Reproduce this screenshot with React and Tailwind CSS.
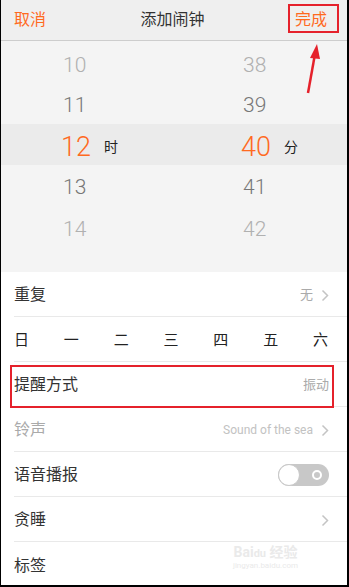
import React from 'react';

const ORANGE = 'text-[#ff6a1f]';

const Chevron = ({ className = '' }) => (
  <svg width="8" height="13" viewBox="0 0 8 13" className={className}>
    <path d="M1.5 1.5 L6.5 6.5 L1.5 11.5" fill="none" stroke="#c4c4c4" strokeWidth="1.5" />
  </svg>
);

const PickerRow = ({ hour, minute, tone, h }) => (
  <div className={`grid grid-cols-[180px_1fr] items-center ${h} pt-[3px] text-[21px] font-light ${tone}`}>
    <div className="pl-[62px]">{hour}</div>
    <div className="pl-[62px]">{minute}</div>
  </div>
);

const Row = ({ children, last = false }) => (
  <div className={`h-[45px] flex items-center pt-[2px] pr-[18px] ${last ? '' : 'border-b border-[#e9e9e9]'}`}>
    {children}
  </div>
);

const days = ['日', '一', '二', '三', '四', '五', '六'];

export default function App() {
  return (
    <div
      className="relative w-[349px] h-[587px] bg-white border-l border-r-2 border-b-2 border-black overflow-hidden"
      style={{ fontFamily: 'Roboto, "Noto Sans CJK SC", sans-serif' }}
    >
      {/* header */}
      <div className="h-[41px] flex items-center justify-between bg-[#efefef] border-b border-[#cdcdcd] px-[13px] text-[16px]">
        <span className={ORANGE}>取消</span>
        <span className="text-[#333] pl-[4px]">添加闹钟</span>
        <span className={`${ORANGE} pr-[7px]`}>完成</span>
      </div>

      {/* time picker */}
      <div className="h-[231px] bg-[#f4f4f4] pt-[3px]">
        <PickerRow hour="10" minute="38" tone="text-[#b0b0b0]" h="h-[40px]" />
        <PickerRow hour="11" minute="39" tone="text-[#777]" h="h-[40px]" />
        <div className="grid grid-cols-[180px_1fr] items-center h-[41px] pt-[3px] bg-[#ebebeb]">
          <div className="pl-[60px] flex items-center">
            <span className={`${ORANGE} text-[27px] font-light`}>12</span>
            <span className="ml-[13px] text-[14px] text-[#222]">时</span>
          </div>
          <div className="pl-[60px] flex items-center">
            <span className={`${ORANGE} text-[27px] font-light`}>40</span>
            <span className="ml-[13px] text-[14px] text-[#222]">分</span>
          </div>
        </div>
        <PickerRow hour="13" minute="41" tone="text-[#777]" h="h-[42px]" />
        <PickerRow hour="14" minute="42" tone="text-[#b0b0b0]" h="h-[42px]" />
      </div>

      {/* settings list */}
      <div className="pl-[13px] text-[16px] text-[#333]">
        <Row>
          <span className="flex-1">重复</span>
          <span className="text-[13px] text-[#aaa] mr-[8px]">无</span>
          <Chevron />
        </Row>
        <div className="h-[45px] flex items-center justify-between pt-[2px] pr-[19px] border-b border-[#e9e9e9] text-[15px] text-[#222]">
          {days.map((d) => (
            <span key={d}>{d}</span>
          ))}
        </div>
        <Row>
          <span className="flex-1">提醒方式</span>
          <span className="text-[13px] text-[#aaa]">振动</span>
        </Row>
        <Row>
          <span className="flex-1 text-[#aaa]">铃声</span>
          <span className="text-[12px] text-[#c2c2c2] mr-[8px]">Sound of the sea</span>
          <Chevron />
        </Row>
        <Row>
          <span className="flex-1">语音播报</span>
          <div className="relative w-[51px] h-[22px] rounded-full bg-[#c8c8c8]">
            <div className="absolute left-0 top-0 w-[22px] h-[22px] rounded-full bg-white border border-[#c8c8c8]" />
            <div className="absolute right-[7px] top-[6px] w-[10px] h-[10px] rounded-full border-2 border-white" />
          </div>
        </Row>
        <Row>
          <span className="flex-1">贪睡</span>
          <Chevron />
        </Row>
        <Row last>
          <span className="flex-1">标签</span>
        </Row>
      </div>

      {/* baidu watermark */}
      <div className="absolute left-[232px] top-[545px] flex flex-col items-center text-[#eaeaea] leading-none pointer-events-none">
        <span className="text-[14px] font-bold">Bai<span className="text-[11px]">du</span> 经验</span>
        <span className="text-[8px] mt-[3px]">jingyan.baidu.com</span>
      </div>

      {/* annotations */}
      <div className="absolute left-[287px] top-[4px] w-[51px] h-[29px] border-2 border-[#e5212b]" />
      <div className="absolute left-[9px] top-[365px] w-[324px] h-[43px] border-2 border-[#e5212b]" />
      <svg className="absolute left-0 top-0" width="349" height="120">
        <line x1="307" y1="93" x2="314" y2="54" stroke="#e5212b" strokeWidth="2.5" />
        <polygon points="316,44 309,58 319,59" fill="#e5212b" />
      </svg>
    </div>
  );
}
